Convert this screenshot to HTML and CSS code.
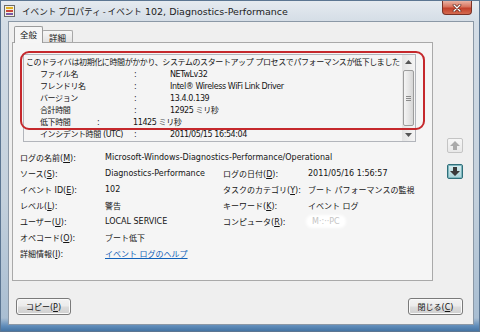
FILE: index.html
```html
<!DOCTYPE html>
<html lang="ja">
<head>
  <meta charset="UTF-8">
  <link rel="stylesheet" href="styles.css">
</head>
<body>
  <div class="window">
    <div class="titlebar">
      <svg class="app-icon" width="11" height="12" viewBox="0 0 11 12">
        <rect x="0.5" y="0.5" width="10" height="11" fill="#f4f0e0" stroke="#6b6b6b"/>
        <rect x="2" y="2" width="7" height="2" fill="#e0b020"/>
        <rect x="2" y="5" width="7" height="2" fill="#c8463a"/>
        <rect x="2" y="8" width="7" height="2" fill="#7a5aa8"/>
      </svg>
      <span class="title"><span class="ja">イベント プロパティ - イベント</span> 102, Diagnostics-Performance</span>
      <div class="close-btn">
        <svg width="10" height="8" viewBox="0 0 10 8">
          <path d="M2 1 L8 7 M8 1 L2 7" stroke="#5a1c12" stroke-width="2.6" stroke-linecap="round"/>
          <path d="M2 1 L8 7 M8 1 L2 7" stroke="#ffffff" stroke-width="1.4" stroke-linecap="round"/>
        </svg>
      </div>
    </div>

    <div class="client">
      <div class="main">
        <div class="tabctl">
          <div class="tabs">
            <div class="tab active">全般</div>
            <div class="tab">詳細</div>
          </div>
          <div class="panel">
            <div class="desc">
              <div class="desc-text">
                <div class="line">このドライバは初期化に時間がかかり、システムのスタートアップ プロセスでパフォーマンスが低下しました</div>
                <div class="kv"><span class="k">ファイル名</span><span class="c">:</span><span>NETwLv32</span></div>
                <div class="kv"><span class="k">フレンドリ名</span><span class="c">:</span><span>Intel® Wireless WiFi Link Driver</span></div>
                <div class="kv"><span class="k">バージョン</span><span class="c">:</span><span>13.4.0.139</span></div>
                <div class="kv"><span class="k">合計時間</span><span class="c">:</span><span>12925 ミリ秒</span></div>
                <div class="kv short"><span class="k">低下時間</span><span class="c">:</span><span>11425 ミリ秒</span></div>
                <div class="kv"><span class="k">インシデント時間 (UTC)</span><span class="c">:</span><span>2011/05/15 16:54:04</span></div>
              </div>
              <div class="vscroll">
                <div class="sb-btn">
                  <svg width="7" height="4" viewBox="0 0 7 4"><path d="M0 4 L3.5 0 L7 4 Z" fill="#555"/></svg>
                </div>
                <div class="sb-track">
                  <div class="sb-thumb"><span class="grip"></span></div>
                </div>
                <div class="sb-btn">
                  <svg width="7" height="4" viewBox="0 0 7 4"><path d="M0 0 L3.5 4 L7 0 Z" fill="#555"/></svg>
                </div>
              </div>
            </div>

            <div class="props">
              <span>ログの名前(<u>M</u>):</span>
              <span class="wide">Microsoft-Windows-Diagnostics-Performance/Operational</span>
              <span>ソース(<u>S</u>):</span>
              <span>Diagnostics-Performance</span>
              <span>ログの日付(<u>D</u>):</span>
              <span>2011/05/16 1:56:57</span>
              <span>イベント ID(<u>E</u>):</span>
              <span>102</span>
              <span>タスクのカテゴリ(<u>Y</u>):</span>
              <span>ブート パフォーマンスの監視</span>
              <span>レベル(<u>L</u>):</span>
              <span>警告</span>
              <span>キーワード(<u>K</u>):</span>
              <span>イベント ログ</span>
              <span>ユーザー(<u>U</u>):</span>
              <span>LOCAL SERVICE</span>
              <span>コンピュータ(<u>R</u>):</span>
              <span><span class="blurred">M·:··PC</span></span>
              <span>オペコード(<u>O</u>):</span>
              <span class="wide">ブート低下</span>
              <span>詳細情報(<u>I</u>):</span>
              <span class="wide"><a class="link" href="#">イベント ログのヘルプ</a></span>
            </div>

            <div class="mark"></div>
          </div>
        </div>

        <div class="nav">
          <div class="nav-btn disabled">
            <svg width="10" height="9" viewBox="0 0 10 9"><path d="M5 0 L10 5 L7 5 L7 9 L3 9 L3 5 L0 5 Z" fill="#a9a9a9"/></svg>
          </div>
          <div class="nav-btn focused">
            <svg width="10" height="9" viewBox="0 0 10 9"><path d="M5 9 L10 4 L7 4 L7 0 L3 0 L3 4 L0 4 Z" fill="#3a3a3a"/></svg>
          </div>
        </div>
      </div>

      <div class="buttons">
        <button class="btn">コピー(<u>P</u>)</button>
        <button class="btn">閉じる(<u>C</u>)</button>
      </div>
    </div>
  </div>
</body>
</html>
```

FILE: styles.css
```css
body {
  margin: 0;
  width: 480px;
  height: 332px;
  overflow: hidden;
  font-family: "DejaVu Sans", "Noto Sans CJK JP", sans-serif;
  font-size: 8px;
  color: #141414;
}
.window {
  width: 480px;
  height: 332px;
  box-sizing: border-box;
  display: flex;
  flex-direction: column;
  background: linear-gradient(#e6ebf0, #d4dde6 22px, #c3d0dc 200px, #a9bed2 318px, #5f8cba 326px, #3f6f9f 332px);
  box-shadow: inset 0 0 0 1px #5c7692;
}
.titlebar {
  height: 21px;
  flex: none;
  display: flex;
  align-items: center;
  padding-left: 4px;
}
.app-icon {
  flex: none;
  margin-top: 1px;
}
.title {
  margin-left: 7px;
  font-size: 9.5px;
  color: #1c1c1c;
  white-space: nowrap;
}
.title .ja {
  font-family: "Noto Sans CJK JP", sans-serif;
  font-size: 8.6px;
}
.close-btn {
  margin-left: auto;
  margin-right: 8px;
  align-self: flex-start;
  margin-top: 1px;
  width: 30px;
  height: 14px;
  box-sizing: border-box;
  border: 1px solid #7a3226;
  border-top: none;
  border-radius: 0 0 4px 4px;
  background: linear-gradient(#eab3a4, #d8735d 45%, #c2402a 55%, #d46a4f);
  display: flex;
  align-items: center;
  justify-content: center;
}

/* client area */
.client {
  margin: 0 6px 0 8px;
  height: 304px;
  flex: none;
  box-sizing: border-box;
  border: 1px solid #8b98a6;
  background: #efefef;
  display: flex;
  flex-direction: column;
}
.main {
  display: flex;
  padding-top: 4px;
}
.tabctl {
  margin-left: 3px;
  width: 421px;
}
.tabs {
  display: flex;
  align-items: flex-end;
  height: 16px;
  padding-left: 2px;
}
.tab {
  box-sizing: border-box;
  border: 1px solid #a7a7a7;
  border-bottom: none;
  border-radius: 2px 2px 0 0;
  background: linear-gradient(#f7f7f7, #e3e3e3);
  font-family: "Noto Sans CJK JP", sans-serif;
  font-size: 8.5px;
  display: flex;
  align-items: center;
  justify-content: center;
  width: 31px;
  height: 12px;
  margin-left: -1px;
}
.tab.active {
  width: 29px;
  height: 17px;
  margin-left: 0;
  margin-bottom: -1px;
  background: #f6f6f6;
  border-color: #9b9b9b;
  position: relative;
  z-index: 1;
  padding-bottom: 2px;
}
.panel {
  position: relative;
  height: 239px;
  box-sizing: border-box;
  border: 1px solid #a9a9a9;
  background: #f5f5f5;
}

/* description box */
.desc {
  margin: 11px 0 0 10px;
  width: 393px;
  height: 88px;
  box-sizing: border-box;
  border: 1px solid #b2b5bb;
  background: #f4f4f4;
  display: flex;
}
.desc-text {
  flex: 1;
  overflow: hidden;
  white-space: nowrap;
  padding: 2px 0 0 2px;
  line-height: 12px;
  letter-spacing: -0.4px;
}
.kv {
  display: flex;
  padding-left: 14px;
}
.kv .k {
  width: 94px;
  flex: none;
}
.kv.short .k {
  width: 57px;
}
.kv .c {
  width: 36px;
  flex: none;
}
.vscroll {
  width: 13px;
  flex: none;
  display: flex;
  flex-direction: column;
  background: linear-gradient(90deg, #e4e4e4, #f4f4f4);
}
.sb-btn {
  height: 13px;
  display: flex;
  align-items: center;
  justify-content: center;
}
.sb-track {
  flex: 1;
  padding: 2px 1px;
  display: flex;
}
.sb-thumb {
  flex: 1;
  border: 1px solid #9c9c9c;
  border-radius: 2px;
  background: linear-gradient(90deg, #f4f4f4, #e6e6e6 50%, #d6d6d6);
  display: flex;
  align-items: center;
  justify-content: center;
}
.grip {
  width: 5px;
  height: 5px;
  background: repeating-linear-gradient(#8a8a8a 0 1px, transparent 1px 2px);
}

/* properties */
.props {
  margin: 7px 0 0 7px;
  display: grid;
  grid-template-columns: 85px 118px 85px 1fr;
  grid-auto-rows: 16px;
  align-items: center;
  white-space: nowrap;
}
.props .wide {
  grid-column: span 3;
}
.link {
  color: #1060b8;
  text-decoration: underline;
}
.blurred {
  display: inline-block;
  padding: 0 4px;
  background: #ffffff;
  color: #c4c4c4;
  border-radius: 4px;
  box-shadow: 0 0 3px 2px #ffffff;
}

/* red annotation drawn over the screenshot */
.mark {
  position: absolute;
  left: 7px;
  top: 8px;
  width: 405px;
  height: 79px;
  box-sizing: border-box;
  border: 2px solid #c5282c;
  border-radius: 9px;
}

/* previous / next event */
.nav {
  margin-left: 14px;
  padding-top: 112px;
  display: flex;
  flex-direction: column;
  gap: 11px;
}
.nav-btn {
  width: 16px;
  height: 15px;
  box-sizing: border-box;
  border: 1px solid #c4c4c4;
  border-radius: 2px;
  background: linear-gradient(#f6f6f6, #e8e8e8);
  display: flex;
  align-items: center;
  justify-content: center;
}
.nav-btn.focused {
  border: 1px solid #2f6f7a;
  background: linear-gradient(#d9eef0, #a9d3d8);
  box-shadow: inset 0 0 0 1px #7fb7bf;
}

/* dialog buttons */
.buttons {
  display: flex;
  justify-content: space-between;
  margin-top: 17px;
  padding: 0 10px 0 7px;
}
.btn {
  width: 55px;
  height: 17px;
  padding: 0;
  border: 1px solid #7a7a7a;
  border-radius: 3px;
  background: linear-gradient(#f3f3f3, #ebebeb 48%, #dddddd 52%, #cfcfcf);
  box-shadow: inset 0 0 0 1px #fafafa;
  font-family: "DejaVu Sans", "Noto Sans CJK JP", sans-serif;
  font-size: 8px;
  color: #141414;
}
```
